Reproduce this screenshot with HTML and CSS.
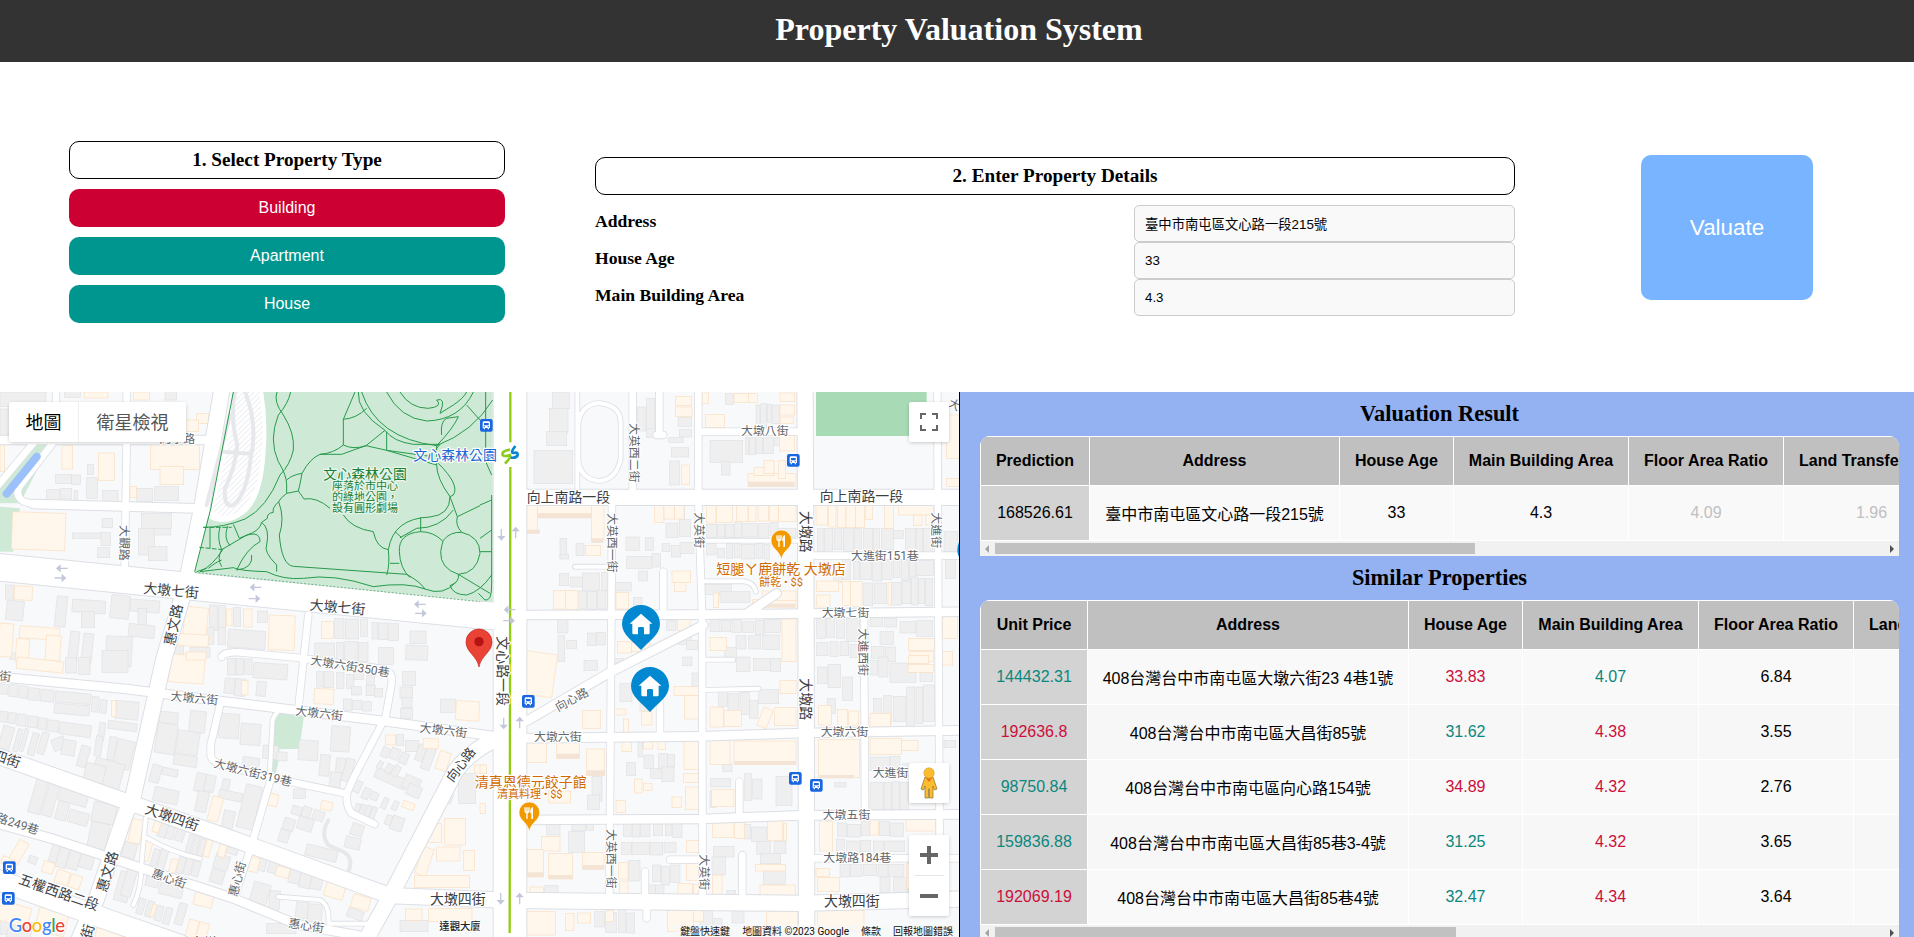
FILE: index.html
```html
<!DOCTYPE html>
<html lang="zh-Hant">
<head>
<meta charset="utf-8">
<title>Property Valuation System</title>
<link rel="stylesheet" href="styles.css">
</head>
<body>
<header class="header"><h1>Property Valuation System</h1></header>

<section class="controls">
  <div class="types">
    <h2 class="step">1. Select Property Type</h2>
    <button class="type active">Building</button>
    <button class="type">Apartment</button>
    <button class="type">House</button>
  </div>
  <div class="details">
    <h2 class="step">2. Enter Property Details</h2>
    <div class="field"><label>Address</label><input type="text" value="臺中市南屯區文心路一段215號"></div>
    <div class="field"><label>House Age</label><input type="text" value="33"></div>
    <div class="field"><label>Main Building Area</label><input type="text" value="4.3"></div>
  </div>
  <button class="valuate">Valuate</button>
</section>

<main class="content">
  <div class="map">
    <svg class="canvas" viewBox="0 21 2877 1635" width="959" height="545">
      <defs>
        <pattern id="hatch" width="16" height="16" patternUnits="userSpaceOnUse"><path d="M-4 20L20-4M-4 4L4-4M12 20L20 12" stroke="#d9dce1" stroke-width="2"/></pattern>
        <g id="w80"><path d="M-10 546L530 600L1440 690L1540 696"/></g>
        <g id="w98"><path d="M1530 0V1670"/></g>
        <g id="w58"><path d="M-10 1484L300 1596L540 1680"/></g>
        <g id="w46">
          <path d="M668 0L605 370L558 600L493 816L398 1240L375 1290L290 1540L230 1680"/>
          <path d="M1530 337H2890M2415 0L2418 700L2420 1670"/>
          <path d="M-10 1112L400 1257L760 1384L1170 1532L1530 1546L2400 1555L2890 1542"/>
          <path d="M1520 1050Q1420 1085 1365 1160L1175 1526L1095 1670"/>
        </g>
        <g id="w26">
          <path d="M-10 875L380 912L660 948L1150 1008L1530 1060L2100 1054L2410 1044L2890 1036"/>
          <path d="M1540 690L2100 689L2890 680M2243 684L2330 625"/>
          <path d="M1580 1008L1830 862L2110 720"/>
          <path d="M1540 1305L2100 1302L2400 1291L2890 1288"/>
          <path d="M-10 165H640M100 357L590 370"/>
          <path d="M-10 1315L160 1362L420 1448L700 1540L890 1618L1120 1660"/>
        </g>
        <g id="w20">
          <path d="M168 0V165M380 0V170L374 560M1898 0V337M2095 0L2095 350L2106 680L2108 1550M1836 337L1834 700L1828 1550M2812 0L2815 700L2820 1550M2592 690L2595 1290"/>
          <path d="M2095 140H2400M2420 512H2890M2420 1420H2890"/>
          <path d="M925 690L895 970M660 960L632 1080V1110Q635 1130 665 1140L870 1190L1040 1226L1060 1180L1150 1008M665 816Q670 800 720 802L890 818L1150 852Q1182 862 1174 900L1155 1008"/>
          <path d="M810 1190L755 1380L702 1540M1042 1220Q1035 1260 1055 1285L1124 1318"/>
          <path d="M1978 0V140M1990 690V560M1980 930V1050M1990 150H1970"/>
          <path d="M1935 1536V1460M2227 1530V1410M2218 1290V1190M1940 1540V1600M2010 1424H2110"/>
          <path d="M102 172L-10 306M160 172L58 305Q44 335 72 350L100 357"/>
        </g>
        <g id="w12">
          <path d="M833 980Q815 1000 817 1020L808 1190M437 1300L424 1440Q425 1510 400 1560M440 1358Q510 1400 600 1421M835 1535L960 1545Q990 1560 985 1616H1120"/>
          <path d="M2110 467H2400M1725 545H1840M2110 824H2200M2110 915L2276 911M2110 589H2230Q2260 590 2268 620"/>
          <path d="M1735 120Q1740 60 1795 54Q1860 60 1862 110V220Q1850 285 1795 288Q1740 280 1735 225ZM1732 20V310"/>
        </g>
        <path id="bus" d="M-13-19h26a6 6 0 0 1 6 6v26a6 6 0 0 1-6 6h-26a6 6 0 0 1-6-6v-26a6 6 0 0 1 6-6z"/>
        <g id="busstop">
          <use href="#bus" fill="#1a66e0"/>
          <path fill="#fff" fill-rule="evenodd" d="M-7-12H7q4 0 4 4V8H8v4H4V8H-4v4H-8V8h-3V-8q0-4 4-4zM-7-7V0H7V-7zM-8 3v3h4V3zM4 3v3h4V3z"/>
        </g>
        <g id="home">
          <path fill="#0288d1" d="M0-57A57 57 0 0 1 57 0C57 32 25 50 0 78C-25 50-57 32-57 0A57 57 0 0 1 0-57z"/>
          <path fill="#fff" d="M0-31L34-1H26V27Q26 31 22 31H9V13Q9 9 5 9H-5Q-9 9-9 13V31H-22Q-26 31-26 27V-1H-34z"/>
        </g>
        <g id="food">
          <path fill="#f29900" stroke="#fff" stroke-width="2" d="M0-32A31 31 0 0 1 31 0C31 24 5 28 0 57C-5 28-31 24-31 0A31 31 0 0 1 0-32z"/>
          <path d="M-13-16V-8Q-13 0-7 0T-1-8V-16M-7-16V19" fill="none" stroke="#fff" stroke-width="4"/>
          <path d="M11 19H6V2H3Q1-15 11-17z" fill="#fff"/>
        </g>
        <path id="ar" d="M-16 0H16M-16 0l9-8v16z"/>
      </defs>

      <rect y="0" width="2880" height="1660" fill="#f8f9fb"/>
      <path fill="#ceead6" d="M0 365L60 370L40 500H0zM105 180H150L60 355H0V310zM818 980L912 992L898 1092H838V1120L826 1168H806z"/>
      <path fill="#a8dab5" d="M2448 21H2780V153H2448z"/>
      <g id="buildings"></g>
      <path d="M985 1306Q960 1350 985 1380L1030 1400Q1065 1420 1042 1466" class="lane"/>

      <g class="casing">
        <use href="#w12" stroke-width="17"/><use href="#w20" stroke-width="25"/><use href="#w26" stroke-width="32"/><use href="#w46" stroke-width="52"/><use href="#w58" stroke-width="66"/><use href="#w80" stroke-width="86"/><use href="#w98" stroke-width="104"/>
      </g>
      <g class="surface">
        <use href="#w12" stroke-width="12"/><use href="#w20" stroke-width="20"/><use href="#w26" stroke-width="26"/><use href="#w46" stroke-width="46"/><use href="#w58" stroke-width="60"/><use href="#w80" stroke-width="80"/><use href="#w98" stroke-width="98"/>
      </g>
      <path d="M110 215L20 326" stroke="#9cc0f9" stroke-width="24" stroke-linecap="round"/>

      <path fill="#ceead6" d="M700 0H1478V650L1440 648L584 562L634 375z"/>
      <path fill="#fff" d="M700 0H786Q806 100 796 210Q788 340 735 385Q675 432 618 395L634 360z"/>
      <path fill="url(#hatch)" d="M715 0H775Q795 100 785 200Q775 320 730 370Q670 415 640 375L690 150z"/>
      <path class="lane" d="M705 20Q690 100 712 180Q705 250 675 310Q670 370 700 360Q740 330 752 220Q775 120 735 20M670 200L750 206M690 90L620 360"/>
      <g class="trail">
        <path d="M610 427H695M598 487L668 494" stroke-dasharray="14 5"/>
        <path d="M700 21L632 372L584 560M831 21Q820 50 850 90Q885 145 880 195Q870 240 840 270Q800 370 735 402Q670 428 610 427"/>
        <path d="M872 21Q865 55 835 90Q805 165 835 230Q860 270 860 300V325Q840 340 836 350Q815 370 820 382Q800 385 802 400L785 412Q778 440 740 450L665 494Q650 520 665 545"/>
        <path d="M860 285Q875 270 906 265Q900 300 895 318L860 325M895 318L912 342Q950 335 990 370M1030 390Q1055 430 1120 440Q1130 490 1165 494"/>
        <path d="M906 265Q930 220 960 208H1025Q1060 195 1098 182L1160 196L1310 240M1030 103V180Q1000 205 960 208M1030 180Q1060 195 1098 182L1155 136Q1180 170 1240 178H1320L1290 214L1160 196V140M1075 21Q1070 80 1155 136M1065 21L1030 103Q1070 100 1100 70"/>
        <path d="M1085 21Q1130 160 1310 182Q1420 140 1478 45M1160 21Q1200 100 1280 108Q1380 105 1420 21M1200 21Q1230 70 1285 70Q1330 65 1310 45Q1340 35 1320 85L1360 60Q1390 40 1400 21M1325 150Q1320 110 1340 100L1375 95Q1360 130 1310 182M1400 60L1440 105"/>
        <path d="M836 350Q855 400 838 450Q845 540 880 544L1220 568Q1260 590 1275 612M785 412Q810 430 800 480Q790 500 830 540V560M668 494Q640 540 600 560L700 548Q720 558 800 560Q850 585 910 580Q1000 565 1120 605Q1220 590 1275 612Q1330 635 1370 590"/>
        <path d="M630 427V490M660 427Q650 460 665 494M683 423Q670 460 690 482M700 418L718 460M718 460Q780 430 780 470Q740 490 710 555Q760 550 755 510M590 560L620 550M625 550Q650 530 665 525"/>
        <path d="M1310 182V240Q1310 280 1350 335Q1350 390 1290 396Q1180 400 1165 494Q1170 540 1160 570M1315 235Q1380 300 1360 330L1350 335L1372 395L1440 362M1360 375Q1320 430 1250 430L1200 458M1185 440L1205 458M1262 396V440"/>
        <path d="M1262 440Q1300 440 1328 468M1330 466Q1350 440 1385 442Q1440 455 1440 505Q1430 565 1375 568Q1320 550 1322 500Q1325 480 1330 466M1262 440Q1195 445 1198 500Q1200 550 1230 578M1385 442Q1365 420 1372 395M1375 568Q1380 590 1350 602Q1360 630 1400 630Q1440 620 1475 570M1375 568L1470 625M1170 535H1198M1440 360L1475 345M1440 460L1475 435M1440 500H1475M1457 21V230L1475 270M1475 330V600Q1475 650 1455 645L1435 625"/>
        <path d="M584 562L1440 650" stroke-dasharray="6 5" stroke-width="2"/>
      </g>

      <g class="rail"><path d="M1531 21V172M1531 246L1529 1644"/></g>
      <g fill="none" stroke-width="8"><path d="M1530 194Q1504 198 1508 210Q1512 216 1530 210Q1534 216 1515 236" stroke="#8ccc1f"/><path d="M1546 183Q1530 204 1540 204Q1554 200 1553 210Q1550 220 1532 218" stroke="#0a85d6"/></g>

      <g class="arrow">
        <use href="#ar" transform="translate(187 550)"/><use href="#ar" transform="translate(180 579) rotate(180)"/>
        <use href="#ar" transform="translate(768 607)"/><use href="#ar" transform="translate(762 641) rotate(180)"/>
        <use href="#ar" transform="translate(1261 658)"/><use href="#ar" transform="translate(1261 685) rotate(180)"/>
        <use href="#ar" transform="translate(1504 448) rotate(-90)"/><use href="#ar" transform="translate(1547 444) rotate(90)"/>
        <use href="#ar" transform="translate(1530 674)"/><use href="#ar" transform="translate(1526 707) rotate(180)"/>
        <use href="#ar" transform="translate(1511 1014) rotate(-90)"/><use href="#ar" transform="translate(1559 1014) rotate(90)"/>
        <use href="#ar" transform="translate(1502 1540) rotate(-90)"/><use href="#ar" transform="translate(1559 1542) rotate(90)"/>
      </g>

      <g class="label major">
        <text transform="translate(429 624) rotate(5)">大墩七街</text>
        <text transform="translate(928 674) rotate(5)">大墩七街</text>
        <text x="1580" y="352">向上南路一段</text><text x="2459" y="349">向上南路一段</text>
        <text transform="translate(522 784) rotate(-78)">惠文路</text>
        <text transform="translate(318 1524) rotate(-73)">惠文路</text>
        <text transform="translate(1493 754) rotate(90)">文心路一段</text>
        <text transform="translate(2402 378) rotate(90)">大墩路</text><text transform="translate(2402 880) rotate(90)">大墩路</text>
        <text transform="translate(432 1284) rotate(19)">大墩四街</text>
        <text transform="translate(-103 1095) rotate(19)">大墩四街</text>
        <text transform="translate(53 1495) rotate(19)">五權西路二段</text>
        <text x="1290" y="1558">大墩四街</text><text x="2472" y="1564">大墩四街</text>
        <text transform="translate(1358 1194) rotate(-53)" font-size="39">向心路</text>
        <text transform="translate(272 1663) rotate(-75)">街</text>
        <text x="570" y="1688">大墩</text>
      </g>
      <g class="label minor">
        <text x="478" y="175">向學路</text>
        <text transform="translate(361 420) rotate(91)">大觀路</text>
        <text transform="translate(1891 114) rotate(90)">大英西二街</text>
        <text transform="translate(1825 384) rotate(90)">大英西一街</text>
        <text transform="translate(2085 382) rotate(90)">大英街</text>
        <text transform="translate(2796 382) rotate(90)">大進街</text>
        <text transform="translate(2577 730) rotate(90)">大進西街</text>
        <text transform="translate(1821 1332) rotate(90)">大英西一街</text>
        <text transform="translate(2099 1408) rotate(90)">大英街</text>
        <text x="2223" y="149">大墩八街</text><text x="2553" y="525">大進街151巷</text>
        <text x="2465" y="697">大墩七街</text><text x="2462" y="1054">大墩六街</text>
        <text x="1602" y="1068">大墩六街</text><text x="2618" y="1177">大進街</text>
        <text x="2468" y="1302">大墩五街</text><text x="2470" y="1430">大墩路184巷</text>
        <text transform="translate(1674 980) rotate(-28)">向心路</text>
        <text transform="translate(-110 876) rotate(5)">大墩六街</text>
        <text transform="translate(511 946) rotate(5)">大墩六街</text>
        <text transform="translate(885 989) rotate(7)">大墩六街</text>
        <text transform="translate(1258 1040) rotate(7)">大墩六街</text>
        <text transform="translate(930 838) rotate(9)">大墩六街350巷</text>
        <text transform="translate(640 1146) rotate(14)">大墩六街319巷</text>
        <text transform="translate(-14 1308) rotate(18)">路249巷</text>
        <text transform="translate(452 1475) rotate(19)">惠心街</text>
        <text transform="translate(710 1537) rotate(-75)">惠心街</text>
        <text transform="translate(864 1627) rotate(8)">惠心街</text>
        <text transform="translate(2842 62) rotate(27)">大墩</text>
      </g>
      <g class="label park"><text class="parkname" x="970" y="281">文心森林公園</text><text x="996" y="315">座落於市中心</text><text x="996" y="348">的綠地公園，</text><text x="996" y="382">設有圓形劇場</text></g>
      <g class="label station"><text x="1240" y="225">文心森林公園</text></g>
      <g class="label shop"><text x="2149" y="568">短腿ㄚ鹿餅乾 大墩店</text><text class="kind" x="2278" y="602">餅乾 • $$</text><text x="1424" y="1206">清真恩德元餃子館</text><text class="kind" x="1491" y="1238">清真料理 • $$</text></g>
      <text class="label place" x="1318" y="1636">達觀大廈</text>

      <use href="#busstop" x="1459" y="121"/><use href="#busstop" x="2380" y="226"/><use href="#busstop" x="1585" y="949"/><use href="#busstop" x="2386" y="1180"/><use href="#busstop" x="2449" y="1201"/><use href="#busstop" x="28" y="1448"/><use href="#busstop" x="25" y="1540"/>
      <use href="#food" x="2344" y="467"/><use href="#food" x="1588" y="1283"/>
      <use href="#home" x="1923" y="717"/><use href="#home" x="1950" y="903"/><use href="#home" x="2929" y="495"/>
      <path fill="#ea4335" stroke="#c5221f" stroke-width="2" d="M1437 732A39 39 0 0 1 1476 771C1476 802 1443 812 1437 846C1431 812 1398 802 1398 771A39 39 0 0 1 1437 732z"/>
      <circle cx="1437" cy="770" r="14" fill="#b31412"/>
      <text class="google" x="26" y="1642"><tspan fill="#4285f4">G</tspan><tspan fill="#ea4335">o</tspan><tspan fill="#fbbc04">o</tspan><tspan fill="#4285f4">g</tspan><tspan fill="#34a853">l</tspan><tspan fill="#ea4335">e</tspan></text>
    </svg>

    <div class="maptype"><span class="on">地圖</span><span>衛星檢視</span></div>
    <div class="ctl full"><svg width="18" height="18" viewBox="0 0 18 18"><path d="M0 6V0H6M12 0H18V6M18 12V18H12M6 18H0V12" fill="none" stroke="#666" stroke-width="4"/></svg></div>
    <div class="ctl pegman"><svg width="18" height="32" viewBox="0 0 18 32"><path d="M5 10H13L17 22L14.500 23L13 19V31H9.500V22H8.500V31H5V19L3.500 23L1 22z" fill="#fbbc2d" stroke="#8a7134" stroke-width=".7"/><path d="M5 10H13L9 15z" fill="#e8711c"/><circle cx="9" cy="6" r="5.200" fill="#fbbc2d" stroke="#cf9a27" stroke-width=".6"/></svg></div>
    <div class="zoom">
      <div><svg width="18" height="18"><path d="M7 0h4v7h7v4h-7v7H7v-7H0V7h7z" fill="#666"/></svg></div>
      <hr>
      <div><svg width="18" height="18"><path d="M0 7h18v4H0z" fill="#666"/></svg></div>
    </div>
    <div class="credits"><span>鍵盤快速鍵</span><span>地圖資料 ©2023 Google</span><span>條款</span><span>回報地圖錯誤</span></div>
  </div>

  <aside class="results">
    <h2>Valuation Result</h2>
    <div class="tablebox">
      <table class="prediction">
        <colgroup><col class="a"><col class="b"><col class="c"><col class="d"><col class="e"><col class="f"></colgroup>
        <tr><th>Prediction</th><th>Address</th><th>House Age</th><th>Main Building Area</th><th>Floor Area Ratio</th><th class="left">Land Transfer</th></tr>
        <tr><td class="key">168526.61</td><td class="addr">臺中市南屯區文心路一段215號</td><td>33</td><td>4.3</td><td class="dim">4.09</td><td class="dim">1.96</td></tr>
      </table>
      <div class="scrollbar"><i class="prev"></i><b class="thumb wide"></b><i class="next"></i></div>
    </div>
    <h2>Similar Properties</h2>
    <div class="tablebox">
      <table class="similar">
        <colgroup><col class="a"><col class="b"><col class="c"><col class="d"><col class="e"><col class="f"></colgroup>
        <tr><th>Unit Price</th><th>Address</th><th>House Age</th><th>Main Building Area</th><th>Floor Area Ratio</th><th class="left">Land</th></tr>
        <tr><td class="key down">144432.31</td><td class="addr">408台灣台中市南屯區大墩六街23 4巷1號</td><td class="up">33.83</td><td class="down">4.07</td><td>6.84</td><td></td></tr>
        <tr><td class="key up">192636.8</td><td class="addr">408台灣台中市南屯區大昌街85號</td><td class="down">31.62</td><td class="up">4.38</td><td>3.55</td><td></td></tr>
        <tr><td class="key down">98750.84</td><td class="addr">408台灣台中市南屯區向心路154號</td><td class="up">34.89</td><td class="up">4.32</td><td>2.76</td><td></td></tr>
        <tr><td class="key down">159836.88</td><td class="addr">408台灣台中市南屯區大昌街85巷3-4號</td><td class="down">31.25</td><td class="up">4.32</td><td>3.65</td><td></td></tr>
        <tr><td class="key up">192069.19</td><td class="addr">408台灣台中市南屯區大昌街85巷4號</td><td class="down">32.47</td><td class="up">4.34</td><td>3.64</td><td></td></tr>
      </table>
      <div class="scrollbar"><i class="prev"></i><b class="thumb"></b><i class="next"></i></div>
    </div>
  </aside>
</main>
<script src="buildings.js"></script>
</body>
</html>
```

FILE: styles.css
```css
* { box-sizing: border-box; }
body { margin: 0; height: 937px; overflow: hidden; background: #fff; color: #000; font-family: "Liberation Serif", "Noto Sans CJK TC", serif; }
h1, h2 { margin: 0; }
.header { height: 62px; padding: 11px 0 0 4px; background: #333; color: #fff; text-align: center; }
.header h1 { font-size: 32px; line-height: 37px; }

.controls { display: flex; align-items: flex-start; height: 330px; padding: 79px 0 0 69px; }
.types { display: flex; flex-direction: column; gap: 10px; width: 436px; }
.step { height: 38px; border: 1px solid #000; border-radius: 10px; font-size: 19.2px; line-height: 36px; text-align: center; }
.type, .valuate { border: 0; border-radius: 10px; color: #fff; font-family: "Liberation Sans", sans-serif; }
.type { height: 38px; padding: 0; background: #009690; font-size: 16px; }
.type.active { background: #cc0033; }
.details { width: 920px; margin: 16px 0 0 90px; }
.details .step { margin-bottom: 10px; }
.field { display: flex; justify-content: space-between; height: 37px; }
.field label { padding-top: 6px; font-size: 17.6px; font-weight: bold; line-height: 20px; }
.field input { width: 381px; height: 37px; padding: 0 10px; border: 1px solid #ccc; border-radius: 5px; background: #f9f9f9; color: #000; font: 13.333px "Liberation Sans", "Noto Sans CJK TC", sans-serif; }
.valuate { width: 172px; height: 145px; margin: 14px 0 0 126px; background: #78b4ff; font-size: 22.4px; }

.content { display: flex; height: 545px; }
.map { position: relative; width: 960px; height: 545px; overflow: hidden; border-right: 1px solid #000; font-family: Roboto, "Noto Sans CJK TC", sans-serif; }
.canvas { display: block; }
.casing { fill: none; stroke: #dcdfe4; stroke-linejoin: round; stroke-linecap: round; }
.surface { fill: none; stroke: #fff; stroke-linejoin: round; stroke-linecap: round; }
.lane { fill: none; stroke: #e6e8ec; stroke-width: 12; stroke-linecap: round; }
.gray { fill: #efefef; stroke: #dfe1e5; stroke-width: 2; }
.peach { fill: #fff6ec; stroke: #fbdfbf; stroke-width: 2; }
.shade { fill: #f3e4d5; }
.trail { fill: none; stroke: #279a4b; stroke-width: 3; stroke-linejoin: round; }
.rail { fill: none; stroke: #94cc10; stroke-width: 7; }
.arrow { fill: #c3c7da; stroke: #c3c7da; stroke-width: 4; }
.label { font-family: Roboto, "Noto Sans CJK TC", sans-serif; paint-order: stroke; stroke: #fff; stroke-width: 7px; stroke-linejoin: round; }
.major { font-size: 41.8px; fill: #3c4043; }
.minor { font-size: 35.8px; fill: #62676c; }
.park { font-size: 33px; fill: #188038; stroke: #e8f6ec; }
.parkname { font-size: 41.8px; }
.station { font-size: 41.8px; fill: #1967d2; }
.shop { font-size: 42px; fill: #d06a00; }
.kind { font-size: 33px; }
.place { font-size: 31px; fill: #222; font-weight: 500; }
.google { font: 500 55px Lato, sans-serif; letter-spacing: -1px; paint-order: stroke; stroke: #fff; stroke-width: 5px; }

.maptype { position: absolute; left: 9px; top: 10px; display: flex; height: 40px; border-radius: 2px; background: #fff; box-shadow: 0 1px 4px -1px rgba(0, 0, 0, .3); color: #565656; font-size: 18px; line-height: 42px; }
.maptype span { width: 107px; text-align: center; }
.maptype .on { width: 70px; border-right: 1px solid #eee; color: #000; }
.ctl { position: absolute; left: 909px; display: flex; align-items: center; justify-content: center; width: 40px; height: 40px; border-radius: 2px; background: #fff; box-shadow: 0 1px 4px -1px rgba(0, 0, 0, .3); }
.full { top: 10px; }
.pegman { top: 371px; }
.zoom { position: absolute; left: 909px; top: 443px; width: 40px; height: 81px; border-radius: 2px; background: #fff; box-shadow: 0 1px 4px -1px rgba(0, 0, 0, .3); }
.zoom div { display: flex; align-items: center; justify-content: center; height: 40px; }
.zoom hr { width: 30px; height: 1px; margin: 0 auto; border: 0; background: #e6e6e6; }
.credits { position: absolute; right: 0; bottom: -2px; display: flex; gap: 12px; height: 14px; padding: 0 6px; background: rgba(247, 247, 247, .75); color: #111; font-size: 10px; line-height: 14px; white-space: nowrap; }

.results { width: 954px; height: 545px; padding: 0 15px 0 20px; overflow: hidden; background: #94b1f2; }
.results h2 { height: 44px; font-size: 22.4px; line-height: 43px; text-align: center; }
.tablebox { overflow: hidden; width: 919px; border-radius: 10px 10px 0 0; background: #fff; }
table { width: 1060px; border-collapse: separate; border-spacing: 0; table-layout: fixed; border-left: 1px solid #fff; border-top: 1px solid #fff; font: 16px "Liberation Sans", "Noto Sans CJK TC", sans-serif; }
th, td { padding: 0; border-right: 1px solid #fff; border-bottom: 1px solid #fff; text-align: center; white-space: nowrap; }
th { height: 49px; background: #c0c0c0; }
th.left { padding-left: 15px; text-align: left; }
td { height: 55px; background: #f9f9f9; }
tr:nth-child(odd) td { background: #f7f7f7; }
tr:nth-child(n) .key { background: #d3d3d3; }
.dim { color: #c0c0c0; }
.up { color: #cc0f3c; }
.down { color: #0b877e; }
.a { width: 109px; } .b { width: 250px; } .c { width: 114px; } .d { width: 175px; } .e { width: 155px; } .f { width: 176px; }
.prediction { width: 980px; }
.similar .a { width: 107px; } .similar .b { width: 321px; } .similar .d { width: 176px; }
.similar { width: 1050px; }
.scrollbar { display: flex; align-items: center; width: 919px; height: 15px; padding: 0 5px; background: #f1f1f1; }
.prev, .next { width: 0; height: 0; border: 4px solid transparent; }
.prev { border-left: 0; border-right-color: #a3a3a3; }
.next { margin-left: auto; border-right: 0; border-left-color: #505050; }
.thumb { width: 461px; height: 11px; margin-left: 6px; background: #c1c1c1; }
.thumb.wide { width: 480px; }
```

FILE: buildings.js
```js
// Footprints as "x y width height angle", one list per map tile.
const tiles = [
  { at: [0, 0],
    gray: '0 21 138 44,0 72 110 100,193 5 48 32,495 5 35 40,167 268 48 28,215 270 26 28,262 238 18 30,260 278 32 62,140 314 38 32,182 310 32 32,222 316 10 30,308 316 46 36,410 310 48 40,464 305 72 42,306 400 32 28,217 444 86 16,303 442 28 40,293 488 36 30,424 385 90 45,415 430 48 80,445 485 56 42,462 430 50 20,16 600 26 42,22 645 52 58 6,172 632 32 92 6,218 642 100 38 4,244 680 40 48,336 628 56 70 6,392 642 88 36 4,414 670 26 60,388 715 78 38 6,212 738 28 94 6,252 744 30 90 6,320 752 78 90 3,30 804 16 20,628 660 24 76,656 662 20 78,700 668 22 56,772 678 30 34,686 732 112 54 4,620 728 22 50,654 728 22 50,524 782 26 34,570 788 60 30,1004 700 28 60,1036 702 40 60,1082 702 20 52,1116 712 18 50,1136 714 28 50,1164 716 32 50,1230 738 48 38,1218 780 66 44 2,944 774 60 44,1010 772 20 50,1034 770 40 60,1076 772 28 58,1136 788 44 50',
    peach: '252 21 72 18,400 21 48 24,186 182 32 70,295 204 48 82,452 175 146 78,480 245 70 54,590 86 36 30,556 105 40 35,390 305 20 32,38 380 160 112 2,0 180 14 80,44 602 54 42 3,0 714 42 100 4,60 722 120 36 4,50 760 40 70 4,140 750 44 76 4,556 664 70 88 5,530 745 96 36 3,680 672 16 50,730 672 26 54,808 690 78 104 2,964 710 36 50' },
  { at: [1440, 0],
    gray: '218 21 50 50,208 70 56 75,200 140 60 42,162 196 116 100,472 66 26 72,500 40 24 100,500 130 30 28,594 98 40 26,598 134 36 22,566 158 44 14,574 188 52 28,568 228 30 72,828 60 12 62,842 56 18 72,862 58 12 54,876 60 22 56,736 26 24 32,690 166 98 66,724 230 26 40,796 158 10 50,808 158 18 50,828 158 20 48,850 158 30 48,884 158 18 24,680 418 30 40,712 418 22 38,736 418 26 40,764 410 22 48,786 416 46 40,836 416 30 44,870 412 24 40,894 430 54 26,582 350 32 50,558 414 36 44,598 404 34 50,438 456 40 40,496 458 24 38,240 460 20 60,240 508 26 14,288 476 24 36,440 514 76 36,476 558 26 30,546 476 24 24,574 482 28 34,600 472 40 34,516 506 26 40,680 476 28 34,712 490 22 28,740 476 18 44,762 476 18 42,784 478 40 44,828 476 20 44,852 478 16 44,238 566 28 36,272 576 36 30,308 564 50 54,364 562 24 58,290 618 30 54,322 620 28 54,352 616 26 56,400 592 54 26,460 638 26 38,674 598 80 30,720 620 90 32,1012 430 20 70,1034 430 24 72,1062 430 24 64,1090 430 30 70,1124 430 20 62,1150 430 28 72,1180 430 18 68,1204 430 36 64,1240 436 30 24,1276 430 30 66,1308 430 20 70,1330 430 28 72,1060 534 26 58,1088 524 24 60,1120 530 18 52,1140 526 34 58,1178 528 26 60,1206 526 30 58,1240 528 20 50,1264 526 22 60,1288 528 18 56,1310 526 50 46,1150 594 28 68,1182 594 38 62,1234 592 30 68,1266 588 26 68,1294 576 20 84,1316 580 18 76,1336 580 22 82,232 700 32 44,234 752 20 78,260 766 30 24,322 744 26 38,350 742 26 38,464 706 38 30,560 706 28 30,596 746 38 32,620 766 34 28,690 704 30 36,724 706 28 34,756 704 28 38,788 710 34 32,826 706 26 42,854 704 48 38,768 752 30 40,806 752 36 40,848 750 50 44,734 788 36 32,1010 700 26 60,1040 700 24 58,1070 698 24 62,1100 700 40 70,1010 772 34 40,1050 770 24 44,1080 770 26 42,1110 778 26 40,1170 698 38 26,1214 700 36 26,1260 710 46 34,1310 706 48 48,1200 740 40 38,1174 784 38 36,1216 786 30 44,1392 440 40 60,1396 520 30 60',
    peach: '586 34 48 28,586 66 50 28,676 88 58 40,666 21 20 34,762 26 44 26,806 26 26 26,900 24 44 26,900 60 44 30,900 96 40 20,898 152 46 46,604 240 24 58,804 266 144 38,822 248 60 24,852 226 30 40,896 226 20 54,138 362 34 82,172 362 162 24,334 362 38 106,524 356 28 56,552 358 32 44,584 356 28 46,316 482 46 30,680 360 28 54,710 360 48 52,770 360 34 50,806 362 22 48,834 362 32 46,868 362 28 46,896 362 52 48,220 616 36 56,256 616 38 58,408 622 38 50,412 770 42 34,454 772 56 28,576 558 56 34,584 592 34 28,700 624 16 44,818 644 130 22,848 618 100 28,1008 352 34 68,1046 352 22 74,1072 354 26 74,1098 352 28 76,1126 354 28 74,1156 356 22 48,1214 362 26 68,1256 356 104 34,1300 390 26 32,1336 390 24 30,1088 590 24 72,1112 590 34 74,1224 592 10 68,1010 588 66 32,1010 630 40 36,1388 690 44 70,1388 800 30 40,1286 760 78 36,1290 800 70 30,906 702 42 128,690 758 50 38,592 704 38 32,135 832 70 14,1400 90 40 130,1400 280 40 24' },
  { at: [0, 816],
    gray: '196 2 34 46,236 2 34 50,306 -20 78 66,0 80 26 30 6,30 82 26 36 6,60 86 24 36 6,86 92 34 36 6,124 96 40 36 6,168 102 106 32 5,164 138 106 30 5,278 118 20 46 6,302 128 20 40 6,350 130 68 54 5,0 162 24 32 6,26 166 24 32 6,54 170 26 36 6,84 176 30 34 6,116 182 28 34 6,142 188 36 34 6,182 194 94 36 8,326 190 86 24 7,12 204 34 70 16,56 214 14 70 16,76 214 12 70 16,100 226 20 68 16,128 224 22 66 16,152 250 40 36 -20,190 246 40 46 10,246 264 28 64 16,300 196 18 56 8,290 236 20 60 8,330 238 22 70 8,356 244 52 86 14,290 300 90 80 16,260 316 60 54 12,112 362 36 106 16,150 376 32 100 16,186 384 86 46 16,178 430 34 56 16,212 456 60 38 16,284 432 70 60 12,276 492 56 80 12,160 558 30 56 16,184 560 30 70 16,214 572 34 62 16,248 576 42 54 16,90 594 26 22 20,376 552 40 46 16,364 640 42 90 16,388 620 30 98 16,444 640 40 46 12,488 656 70 54 14,420 722 20 48 16,446 730 20 48 16,474 744 20 46 16,500 750 20 50 16,540 736 24 66 16,676 62 30 46 6,708 64 30 52 6,682 4 24 50,708 4 22 50,734 6 22 46,762 16 102 46 4,772 72 28 44 6,480 162 56 34 6,572 160 48 64 6,476 196 60 90 9,536 218 66 70 9,524 290 70 32 9,660 168 60 74 4,724 198 60 64 4,730 298 50 34 8,460 320 30 54 16,490 330 46 22 12,466 388 74 42 12,592 346 30 56 12,620 352 30 50 12,596 400 34 62 12,670 364 22 44 12,660 396 70 26 12,740 380 50 132 14,674 458 34 54 12,790 264 46 40 4,830 284 32 26 4,898 248 58 60 4,996 206 56 76 4,962 292 30 64 5,1010 302 28 50 5,1042 302 26 70 16,992 344 32 46 5,880 396 36 28,950 44 20 46,972 44 28 48,1010 46 22 48,1040 52 22 42,1054 88 30 26,1098 86 28 30,1124 94 24 26,1030 126 26 34,1058 130 26 28,1088 134 26 28,1062 46 28 22,1100 56 24 28,1208 44 38 42,1200 90 38 34,1206 122 30 30,1202 154 36 30,1322 126 44 40,1190 232 20 34,1216 250 40 34,1152 268 22 30 24,1178 270 26 34 20,1206 284 24 34 20,1260 260 24 50 20,1284 266 28 70 20,1134 330 100 32 24,1140 310 14 24 30,1166 318 18 28 30,1188 322 20 34 30,1220 350 50 42 24,1230 378 42 34 24,1066 366 26 36 24,1096 390 20 34 24,1118 402 22 24 24,1154 420 16 34 24,1184 430 16 28 24,1162 472 18 30 20,1182 474 36 42 20,1070 438 14 40 20,1086 440 14 40 20,1104 444 14 38 20,1120 448 14 40 20,880 444 30 26 18,912 446 26 32 18,944 456 34 30 18,900 476 46 38 18,856 480 34 36 18,844 514 30 38 18,922 560 96 34 14,1040 536 46 34 14,1060 496 36 36 18,484 492 26 46 18,508 500 22 44 18,534 510 26 40 18,570 532 14 54 16,588 536 14 54 16,604 544 18 52 16,688 548 34 40 16,464 574 18 60 16,486 574 22 62 16,540 598 20 50 16,562 602 20 50 16,584 610 22 46 16,650 588 44 44 16,638 634 40 40 16,764 672 52 62 16,810 700 32 62 5,784 590 24 50 16,816 592 30 54 16,872 634 38 42 12,906 636 36 54 12,938 648 34 46 12,890 734 36 50 5,926 740 42 60 4,1048 750 48 28 20,800 800 88 30,1200 790 84 34,0 772 34 60,34 780 70 60 15,1376 350 50 90,1340 406 22 30 20',
    peach: '510 -10 106 84 4,52 0 140 34 6,558 -15 60 24,724 70 20 44,334 130 14 48,944 94 58 46 3,640 416 32 74 15,808 408 30 36 12,966 430 34 26 12,1156 234 30 30,1270 244 46 30 2,1370 130 70 58 4,1322 280 34 56 18,1212 430 36 20 20,398 484 36 72 12,466 490 20 34 18,436 550 24 60 15,622 544 18 54 15,664 548 22 50 15,516 604 20 44 15,752 598 30 44 14,832 626 40 30 14,588 704 56 38 14,982 674 58 42 16,1062 710 54 40 16,60 546 32 70 30,10 596 38 22 22,134 610 34 34 18,174 636 40 40 18,216 650 34 40 18,0 728 100 60 16,120 750 90 70 14,460 740 10 40 16,570 786 30 54 16,600 794 30 50 16,290 812 80 40 10,1286 500 38 56,1334 484 62 80,1270 568 34 84 18,1244 656 164 36,1310 570 70 42,1390 580 34 60,1216 756 50 34,1286 754 130 40,1424 324 30 24' },
  { at: [1440, 816],
    gray: '312 10 40 30,420 80 36 54,400 4 30 26,480 90 30 72,608 0 28 26,636 48 24 40,770 0 40 44,820 4 52 36,872 4 30 40,716 100 26 48,744 110 32 66,780 106 28 66,808 130 26 54,836 98 60 42,1012 30 30 50,1044 22 38 70,1088 60 30 70,1042 124 24 46,1166 10 26 44,1196 0 28 60,1230 18 78 58,1320 30 38 44,1180 124 24 70,1210 116 24 84,1240 118 38 76,1280 90 24 120,1308 90 20 110,1330 84 34 110,440 316 26 40,492 294 28 40,536 290 26 44,562 292 22 36,512 334 40 30,546 330 36 44,474 244 14 56,336 358 30 76,322 414 36 44,692 364 60 26,728 320 28 24,794 350 20 80,818 366 28 60,888 358 48 88,690 402 18 50,1392 250 34 22,1170 300 58 40,1230 298 30 50,1268 320 28 40,1170 376 40 82,1212 376 22 82,1236 374 22 84,1260 376 26 82,200 494 40 40,266 524 48 62,276 496 40 26,320 500 20 20,430 496 26 42,458 496 22 44,482 496 28 42,520 496 28 40,556 494 20 42,578 498 28 44,424 556 30 36,456 556 52 36,510 556 38 38,552 556 36 30,446 610 34 62,518 624 24 50,544 628 24 56,572 624 28 52,498 684 28 40,526 684 26 40,700 568 62 32,696 600 40 54,794 502 18 44,814 510 46 44,830 554 42 38,882 554 36 36,842 590 60 30,850 640 66 42,740 700 26 20,194 686 40 40,1072 498 28 40,1102 502 40 38,1144 492 24 44,1198 494 30 42,1230 498 40 40,1070 546 24 40,1100 552 40 36,1142 550 30 34,1180 552 30 34,1214 552 60 32,1080 622 30 38,1112 622 34 36,1150 622 40 34,1194 622 30 36,1226 622 46 36,1200 662 30 44,1240 662 46 44,344 764 30 46,376 766 34 60,416 756 20 70,440 768 24 60,660 758 38 50,702 784 24 30,756 758 36 40,1064 376 34 14',
    peach: '134 -20 100 130 8,308 160 54 54,400 156 38 18,430 186 16 40,484 164 32 40,582 88 78 28,614 116 44 70,690 150 40 60,732 160 52 48,852 150 30 58 22,884 152 64 54,900 70 48 40,1016 146 38 58,1072 158 30 52,1106 162 30 44,1170 170 62 40,1286 -5 60 24,1284 22 76 24,130 250 70 66,230 252 68 52,320 276 54 80,426 248 28 36,490 248 28 28,534 248 22 30,612 248 48 90,610 350 46 26,464 366 22 42,490 380 26 20,408 430 28 36,576 420 28 32,616 390 42 68,690 250 60 72,762 252 186 70,694 398 68 50,1016 248 122 114,1170 244 94 48,1264 250 50 30,206 402 66 36,0 324 20 26,0 440 16 30,184 538 56 44,142 578 48 82,206 590 72 76,308 586 64 50,416 616 28 50,418 672 26 48,620 550 44 36,620 618 36 52,594 680 44 40,640 682 30 38,150 690 40 20,698 492 64 50,764 496 30 48,862 490 46 60,910 500 10 50,826 622 90 20,840 684 106 32,698 654 28 68,1018 492 40 90,1170 486 26 48,1278 482 88 40,1008 634 40 24,1012 662 66 42,1280 620 90 76,138 764 88 70,256 770 26 50,292 768 40 30,376 760 24 34,562 760 78 64,640 760 30 34,860 764 92 60,1012 760 140 64' }
];

// Extruded side faces under the larger buildings.
const shades = '172 386 162 14,140 434 40 12,334 460 36 14,804 290 140 16,820 656 126 12';
const lowerShades = '230 290 68 14,320 340 54 16,762 312 186 12,142 646 48 14,206 654 72 12,308 624 64 14,1016 354 106 10';
const svgNS = 'http://www.w3.org/2000/svg';
const layer = document.getElementById('buildings');

function draw(list, kind, at) {
  const group = document.createElementNS(svgNS, 'g');
  group.setAttribute('class', kind);
  group.setAttribute('transform', `translate(${at[0]} ${at[1]})`);
  list.split(',').forEach(item => {
    const [x, y, width, height, angle] = item.split(' ').map(Number);
    const rect = document.createElementNS(svgNS, 'rect');
    Object.entries({ x, y, width, height }).forEach(([k, v]) => rect.setAttribute(k, v));
    if (angle) rect.setAttribute('transform', `rotate(${angle} ${x} ${y})`);
    group.appendChild(rect);
  });
  layer.appendChild(group);
}

tiles.forEach(tile => {
  draw(tile.gray, 'gray', tile.at);
  draw(tile.peach, 'peach', tile.at);
});
draw(shades, 'shade', [1440, 0]);
draw(lowerShades, 'shade', [1440, 816]);
```
